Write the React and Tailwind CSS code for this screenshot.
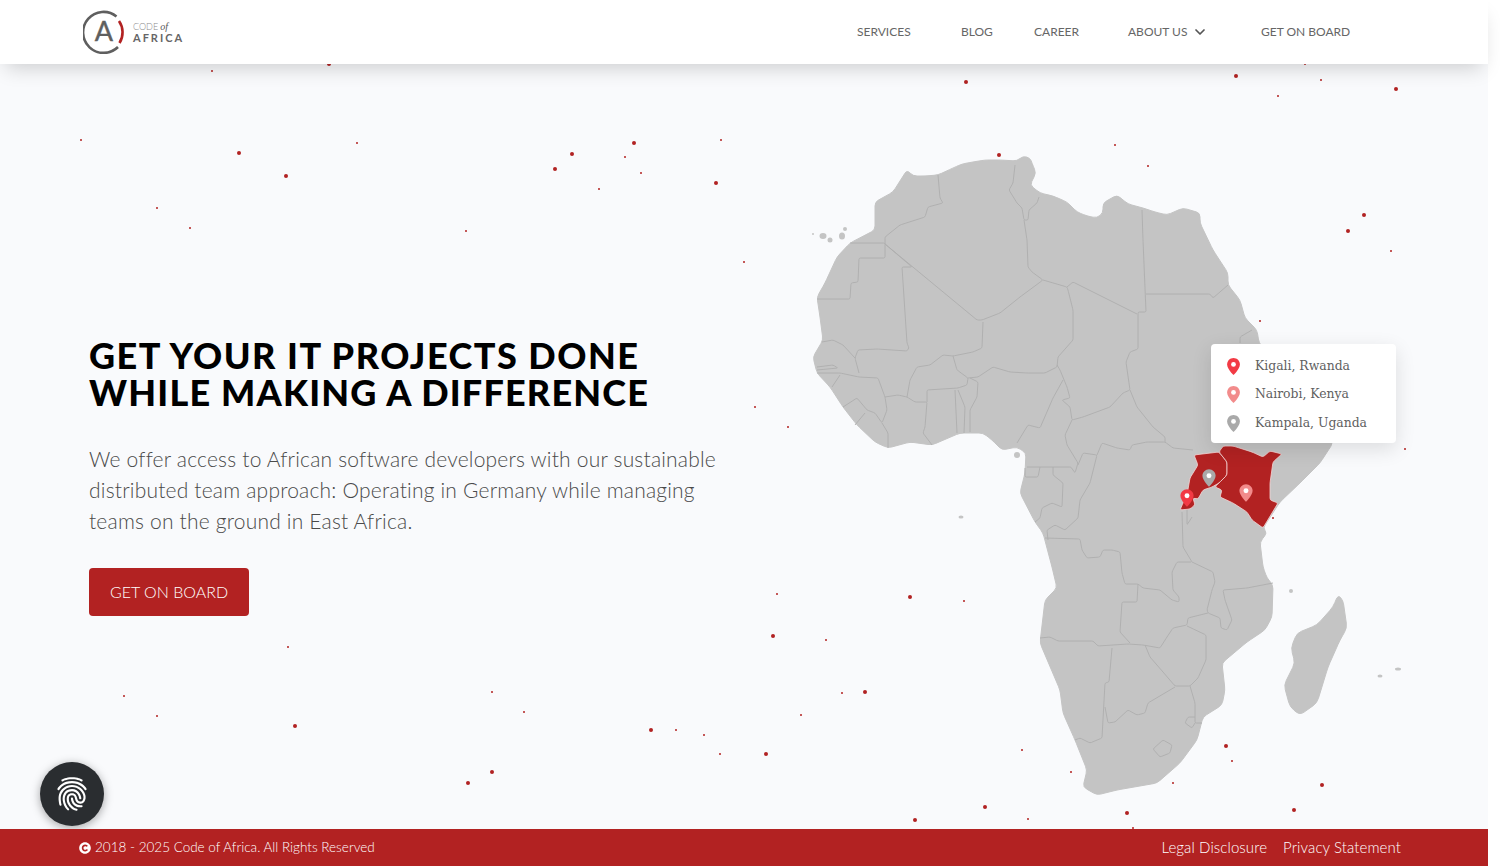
import React from 'react';
import { ChevronDown } from 'lucide-react';
import { FaCopyright } from 'react-icons/fa';
import { IoFingerPrint } from 'react-icons/io5';

// page coordinates: [x, y, radius]
const dots = [
  [329, 64, 2], [966, 82, 2], [1236, 76, 2], [1396, 89, 2], [634, 143, 2], [572, 154, 2], [555, 169, 2],
  [239, 153, 2], [286, 176, 2], [716, 183, 2], [999, 155, 2], [1364, 215, 2], [1348, 231, 2], [910, 597, 2],
  [773, 636, 2], [865, 692, 2], [295, 726, 2], [651, 730, 2], [766, 754, 2], [492, 772, 2], [468, 783, 2],
  [1226, 746, 2], [1322, 785, 2], [985, 807, 2], [1294, 810, 2], [1127, 813, 2], [915, 820, 2],
  [212, 71, 1], [1305, 64, 1], [1321, 80, 1], [1278, 96, 1], [81, 140, 1], [357, 143, 1], [721, 140, 1],
  [625, 157, 1], [641, 173, 1], [599, 189, 1], [157, 208, 1], [190, 228, 1], [466, 231, 1], [744, 262, 1],
  [1115, 145, 1], [1148, 166, 1], [1391, 251, 1], [1260, 321, 1], [755, 407, 1], [788, 427, 1], [1405, 449, 1],
  [1273, 518, 1], [777, 594, 1], [964, 601, 1], [826, 640, 1], [288, 647, 1], [124, 696, 1], [157, 716, 1],
  [492, 692, 1], [524, 712, 1], [842, 693, 1], [801, 715, 1], [676, 730, 1], [704, 735, 1], [720, 754, 1],
  [1022, 750, 1], [1071, 772, 1], [1173, 783, 1], [1232, 761, 1], [1133, 828, 1], [1028, 819, 1],
];

const land =
  'M907 170 L913 176 L925 176 L938 175 L953 168 L962 164 L973 162 L985 160 L1000 160 L1017 161 L1023 156 L1030 158 L1032 163 L1036 173 L1030 185 L1040 193 L1053 196 L1067 202 L1077 212 L1087 216 L1097 218 L1103 213 L1103 203 L1117 195 L1128 204 L1143 208 L1155 212 L1167 215 L1183 208 L1200 213 L1200 223 L1213 250 L1228 273 L1228 285 L1240 300 L1245 318 L1257 330 L1259 343 L1300 390 L1333 443 L1320 463 L1300 483 L1280 502 L1263 528 L1267 533 L1260 542 L1263 567 L1267 578 L1273 585 L1272 617 L1265 630 L1247 642 L1222 663 L1225 690 L1222 705 L1203 717 L1197 740 L1180 763 L1157 783 L1117 790 L1097 795 L1083 787 L1087 770 L1075 740 L1063 713 L1060 690 L1040 643 L1045 600 L1057 588 L1052 567 L1043 533 L1035 522 L1020 493 L1025 473 L1026 453 L1017 447 L1002 450 L992 440 L983 433 L960 433 L932 445 L910 442 L888 448 L875 442 L857 425 L843 407 L830 387 L817 373 L813 357 L823 340 L820 317 L817 297 L825 283 L837 257 L850 243 L875 230 L875 202 L893 192 Z';

const madagascar =
  'M1338 595 L1343 600 L1347 628 L1340 640 L1328 667 L1317 703 L1300 715 L1290 707 L1284 685 L1295 663 L1291 648 L1297 633 L1317 625 L1333 607 Z';

const borders = [
  'M1015 165 L1013 183 L1009 190 L1017 203 L1022 208 L1024 220 L1028 220 L1029 210 L1037 203 L1039 197',
  'M1024 220 L1027 240 L1028 267 L1032 272 L1043 280 L1020 297 L1000 313 L982 320 L977 320 L885 244',
  'M938 175 L940 198 L943 203 L928 207 L925 217 L900 225 L885 237 L885 244',
  'M850 243 L885 243 L885 258 L859 258 L858 282 L851 283 L850 299 L817 299',
  'M885 244 L912 267 L902 267 L907 343 L909 348 L907 351 L877 349 L858 350 L855 358 L859 373',
  'M822 342 L833 340 L843 345 L855 358',
  'M817 373 L840 373 L859 377 L878 378 L885 397 L887 410 L882 423 L875 413 L867 410 L857 398 L843 407',
  'M817 367 L833 365 L838 368 L817 370',
  'M840 375 L832 387',
  'M865 413 L855 425',
  'M885 397 L898 395 L907 397 L915 402 L927 402 L925 427 L923 433 L932 445',
  'M882 423 L888 433 L888 448',
  'M907 397 L910 380 L917 367 L930 365 L943 355 L953 356 L973 352 L982 348 L983 322',
  'M953 356 L957 370 L968 378 L967 385 L958 388 L927 390 L927 402',
  'M955 390 L957 433',
  'M958 390 L965 407 L964 433',
  'M970 378 L978 382 L977 397 L970 410 L970 432',
  'M968 378 L978 377 L993 367 L1010 372 L1027 373 L1045 373 L1057 367 L1058 357 L1073 340 L1073 310 L1068 290 L1067 287 L1043 280',
  'M1067 287 L1073 282 L1137 314',
  'M1142 210 L1143 240 L1146 312 L1138 312 L1138 349 L1130 352 L1126 362 L1130 390 L1123 393 L1110 407 L1083 417 L1072 420 L1070 407 L1062 400 L1070 398 L1067 387 L1060 370 L1057 365',
  'M1146 294 L1210 294 L1213 298 L1228 285',
  'M1063 380 L1053 398 L1040 428 L1028 425 L1017 443',
  'M1072 420 L1065 435 L1067 445 L1078 463 L1075 473 L1071 467 L1027 467',
  'M1025 468 L1025 477 L1038 477 L1040 467',
  'M1053 467 L1053 475 L1063 483 L1062 507 L1052 503 L1042 508 L1040 518 L1035 522',
  'M1078 465 L1083 453 L1097 455 L1090 483 L1080 500 L1078 518 L1065 530 L1055 525 L1047 530 L1048 540',
  'M1097 455 L1102 443 L1117 448 L1130 450 L1132 445 L1147 442 L1165 442 L1173 448 L1193 450',
  'M1130 390 L1137 407 L1153 427 L1165 437 L1165 442',
  'M1240 343 L1240 337 L1252 330',
  'M1182 512 L1183 547 L1192 562 L1177 562 L1172 572 L1173 590 L1179 597 L1179 602 L1172 600 L1160 590 L1143 588 L1138 584 L1125 584 L1122 573 L1120 552 L1112 550 L1103 550 L1100 557 L1087 558 L1082 550 L1080 539 L1045 538',
  'M1187 510 L1187 525 L1192 517',
  'M1138 584 L1137 602 L1122 602 L1120 632 L1130 643',
  'M1040 638 L1050 637 L1058 641 L1093 641 L1098 646 L1128 644 L1143 645 L1160 648 L1167 637 L1173 628 L1187 625 L1188 618 L1208 613',
  'M1187 626 L1206 635 L1206 660 L1198 678 L1190 686 L1175 686 L1163 672 L1150 657 L1145 645',
  'M1112 648 L1109 682 L1105 683 L1102 738 L1090 743 L1080 738 L1075 740',
  'M1105 707 L1108 723 L1115 722 L1128 710 L1137 715 L1145 713 L1148 703 L1175 687',
  'M1190 686 L1195 703 L1195 723 L1202 723',
  'M1195 717 L1188 717 L1185 723 L1192 728 L1195 723',
  'M1163 740 L1172 745 L1170 753 L1160 757 L1153 749 Z',
  'M1192 562 L1213 572 L1215 582 L1212 590 L1207 610 L1208 613 L1220 618 L1221 628 L1227 630 L1232 620 L1225 600 L1223 590 L1247 588 L1273 583',
];

const uganda =
  'M1194 455 L1219 452 L1227 462 L1227 475 L1219 483 L1212 487 L1203 490 L1198 499 L1193 498 L1195 505 L1190 509 L1180 510 L1183 503 L1187 495 L1190 478 L1198 465 Z';
const kenya =
  'M1219 452 L1223 446 L1233 446 L1252 452 L1263 457 L1270 451 L1282 454 L1273 462 L1270 483 L1270 500 L1278 503 L1263 528 L1252 520 L1247 512 L1233 503 L1220 497 L1222 490 L1215 487 L1219 483 L1227 475 L1227 462 Z';

const islands = [
  [1291, 591, 2, 2], [1380, 676, 2.5, 1.5], [1398, 669, 3, 1.5], [1017, 455, 3, 3], [823, 236, 3.5, 3],
  [830, 240, 2.5, 2.5], [842, 236, 3, 3.5], [845, 229, 2, 2], [813, 234, 1, 1], [760, 343, 1.5, 1],
  [763, 353, 2.5, 2.5], [961, 517, 2.5, 1.5],
];

// round the polyline corners a little, by at most `radius` px along each segment
const rounded = (d, radius) => {
  const closed = d.endsWith('Z');
  const pts = d.match(/\d+(\.\d+)? \d+(\.\d+)?/g).map((p) => p.split(' ').map(Number));
  const toward = (a, b) => {
    const len = Math.hypot(b[0] - a[0], b[1] - a[1]);
    const t = Math.min(radius / len, 0.5);
    return [a[0] + (b[0] - a[0]) * t, a[1] + (b[1] - a[1]) * t];
  };
  const n = pts.length;
  let out = closed ? '' : `M${pts[0].join(' ')}`;
  const from = closed ? 0 : 1;
  const to = closed ? n : n - 1;
  for (let i = from; i < to; i++) {
    const p = pts[i];
    const start = toward(p, pts[(i - 1 + n) % n]);
    const end = toward(p, pts[(i + 1) % n]);
    out += `${out ? ' L' : 'M'}${start.join(' ')} Q${p.join(' ')} ${end.join(' ')}`;
  }
  return closed ? `${out} Z` : `${out} L${pts[n - 1].join(' ')}`;
};

const pinPath = 'M12 0C5.4 0 0 5.4 0 12c0 8 12 20 12 20s12-12 12-20C24 5.4 18.6 0 12 0z';

const MapPin = ({ x, y, color, scale }) => (
  <g transform={`translate(${x - 12 * scale} ${y - 16 * scale}) scale(${scale})`}>
    <path d={pinPath} fill={color} />
    <circle cx="12" cy="12" r="4.5" fill="#fff" />
  </g>
);

const AfricaMap = () => (
  <svg viewBox="800 140 610 670" className="block h-[670px] w-[610px]">
    <path d={rounded(land, 4)} fill="#c4c4c4" stroke="#c4c4c4" strokeWidth="1" strokeLinejoin="round" />
    <path d={rounded(madagascar, 5)} fill="#c4c4c4" stroke="#c4c4c4" strokeWidth="1" strokeLinejoin="round" />
    {islands.map(([cx, cy, rx, ry]) => (
      <ellipse key={`${cx}-${cy}`} cx={cx} cy={cy} rx={rx} ry={ry} fill="#c4c4c4" />
    ))}
    {borders.map((d) => (
      <path key={d} d={rounded(d, 1.5)} fill="none" stroke="#aeaeae" strokeWidth="0.9" strokeLinejoin="round" />
    ))}
    <path d={rounded(uganda, 2)} fill="#b22222" stroke="#f5d5d5" strokeWidth="0.8" strokeLinejoin="round" />
    <path d={rounded(kenya, 2)} fill="#b22222" stroke="#f5d5d5" strokeWidth="0.8" strokeLinejoin="round" />
    <MapPin x={1209} y={478} color="#a9a9a9" scale={0.55} />
    <MapPin x={1246} y={493} color="#f28b8b" scale={0.55} />
    <MapPin x={1187} y={498} color="#f23a44" scale={0.55} />
  </svg>
);

const Logo = () => (
  <div className="flex items-center">
    <svg width="44" height="44" viewBox="0 0 44 44" className="block">
      <path d="M33.5 6.5 A20.5 20.5 0 1 0 35 37" fill="none" stroke="#5f5f5f" strokeWidth="2.6" />
      <path d="M36 11 A20 20 0 0 1 36.5 33" fill="none" stroke="#b22222" strokeWidth="2.6" />
      <text x="21" y="31" textAnchor="middle" fontSize="27" fill="#5f5f5f" stroke="#5f5f5f" strokeWidth="0.4" fontFamily="Lato, sans-serif">A</text>
    </svg>
    <div className="ml-[6px] flex flex-col">
      <div className="flex h-[11px] items-center text-[9px] font-light leading-none text-[#8a8a8a]">
        CODE
        <span className="ml-[2px] font-['Liberation_Serif',serif] text-[10px] italic text-[#555]">of</span>
      </div>
      <div className="text-[11px] font-bold leading-none tracking-[2px] text-[#666]">AFRICA</div>
    </div>
  </div>
);

const places = [
  { label: 'Kigali, Rwanda', color: '#f23a44' },
  { label: 'Nairobi, Kenya', color: '#f28b8b' },
  { label: 'Kampala, Uganda', color: '#a9a9a9' },
];

export default function App() {
  return (
    <div className="h-screen w-full overflow-hidden bg-white">
      <div className="relative flex h-[866px] w-[1488px] flex-col bg-[#f9fafc] font-['Lato',sans-serif]">
        {/* particle field */}
        <svg className="absolute left-0 top-0 h-[866px] w-[1488px]" viewBox="0 0 1488 866">
          {dots.map(([cx, cy, r]) => (
            <circle key={`${cx}-${cy}`} cx={cx} cy={cy} r={r} fill="#b22222" />
          ))}
        </svg>

        <header className="relative z-10 flex h-16 shrink-0 items-center bg-white pl-[83px] text-xs text-[#666] shadow-[0_10px_20px_-6px_rgba(0,0,0,0.18)]">
          <div className="w-[774px]">
            <Logo />
          </div>
          <a className="w-[104px]">SERVICES</a>
          <a className="w-[73px]">BLOG</a>
          <a className="w-[94px]">CAREER</a>
          <a className="flex w-[133px] items-center">
            ABOUT US
            <ChevronDown size={16} strokeWidth={2.6} className="ml-[5px] text-[#555]" />
          </a>
          <a>GET ON BOARD</a>
        </header>

        <main className="relative flex flex-1">
          <div className="w-[800px] pl-[89px] pt-[273px]">
            <h1 className="text-[36px] font-black uppercase leading-[37px] text-black">
              <span className="tracking-[1.5px]">Get your IT projects done</span>
              <br />
              <span className="tracking-[1.2px]">while making a difference</span>
            </h1>
            <p className="mt-8 text-[21px] font-light leading-[31px] tracking-[0.2px] text-[#4a4a4a]">
              We offer access to African software developers with our sustainable
              <br />
              distributed team approach: Operating in Germany while managing
              <br />
              teams on the ground in East Africa.
            </p>
            <button className="mt-8 h-12 w-40 rounded bg-[#b22222] text-base font-light text-white">GET ON BOARD</button>
          </div>

          <div className="relative mt-[76px] h-[670px] w-[610px]">
            <AfricaMap />
            <div className="absolute left-[411px] top-[204px] flex h-[99px] w-[185px] flex-col gap-[8.5px] rounded bg-white pl-4 pt-3 font-['DejaVu_Serif',serif] text-[12.4px] text-[#5f5f5f] shadow-[0_6px_20px_rgba(0,0,0,0.12)]">
              {places.map((place) => (
                <div key={place.label} className="flex h-[20px] items-center gap-[15px]">
                  <svg width="13" height="17" viewBox="0 0 24 32" className="block">
                    <path d={pinPath} fill={place.color} />
                    <circle cx="12" cy="12" r="4.5" fill="#fff" />
                  </svg>
                  {place.label}
                </div>
              ))}
            </div>
          </div>

          <button className="absolute left-10 top-[698px] flex h-16 w-16 items-center justify-center rounded-full bg-[#2a2d30] text-white shadow-[0_2px_10px_rgba(0,0,0,0.35)]">
            <IoFingerPrint size={36} />
          </button>
        </main>

        <footer className="relative z-10 flex h-[37px] shrink-0 items-center justify-between bg-[#b22222] pl-[79px] pr-[87px] text-white">
          <div className="flex items-center gap-1 text-[13.5px] font-light">
            <FaCopyright size={12} />
            2018 - 2025 Code of Africa. All Rights Reserved
          </div>
          <div className="flex gap-4 text-[15px] font-light tracking-[0.1px]">
            <a>Legal Disclosure</a>
            <a>Privacy Statement</a>
          </div>
        </footer>
      </div>
    </div>
  );
}
